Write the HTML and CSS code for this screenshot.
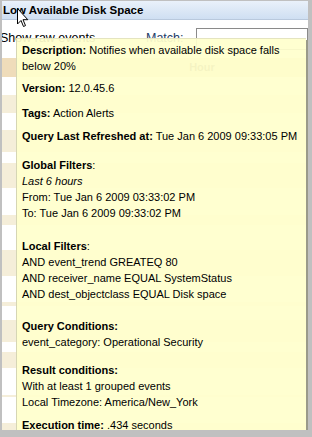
FILE: index.html
```html
<!DOCTYPE html>
<html lang="en">
<head>
  <meta charset="UTF-8" />
  <title>Low Available Disk Space</title>
  <link rel="stylesheet" href="styles.css">
</head>
<body>
  <div class="window">
    <header class="titlebar">Low Available Disk Space</header>

    <div class="toolbar">
      <span class="raw">Show raw events</span>
      <span class="match">Match:</span>
      <input class="match-input" type="text" />
    </div>

    <div class="grid">
      <div class="grid-head"><span></span><span>Hour</span><span></span></div>
      <div class="row"></div>
      <div class="row alt"></div>
      <div class="row"></div>
      <div class="row alt"></div>
      <div class="row"></div>
      <div class="row alt"></div>
      <div class="row"></div>
      <div class="row alt"></div>
      <div class="row"></div>
      <div class="row alt"></div>
      <div class="row"></div>
      <div class="row alt"></div>
      <div class="row"></div>
      <div class="row alt"></div>
      <div class="row"></div>
      <div class="row alt"></div>
      <div class="row"></div>
      <div class="row alt"></div>
      <div class="row"></div>
      <div class="row alt"></div>
    </div>

    <svg class="cursor" width="12" height="20" viewBox="0 0 12 20">
      <path d="M0.5 0.5 L0.5 16 L4 12.5 L6.5 18.5 L8.5 17.6 L6 11.7 L10.8 11.7 Z" fill="#fff" stroke="#000" stroke-width="1" stroke-linejoin="miter"/>
    </svg>

    <div class="tooltip">
      <p><b>Description:</b> Notifies when available disk space falls below 20%</p>
      <p class="sp-version"><b>Version:</b> 12.0.45.6</p>
      <p class="sp-tags"><b>Tags:</b> Action Alerts</p>
      <p class="sp-query"><b>Query Last Refreshed at:</b> Tue Jan 6 2009 09:33:05 PM</p>
      <p class="sp-global"><b>Global Filters</b>:<br>
        <i>Last 6 hours</i><br>
        From: Tue Jan 6 2009 03:33:02 PM<br>
        To: Tue Jan 6 2009 09:33:02 PM</p>
      <p class="sp-local"><b>Local Filters</b>:<br>
        AND event_trend GREATEQ 80<br>
        AND receiver_name EQUAL SystemStatus<br>
        AND dest_objectclass EQUAL Disk space</p>
      <p class="sp-cond"><b>Query Conditions:</b><br>
        event_category: Operational Security</p>
      <p class="sp-result"><b>Result conditions:</b><br>
        With at least 1 grouped events<br>
        Local Timezone: America/New_York</p>
      <p class="sp-exec"><b>Execution time:</b> .434 seconds</p>
    </div>
  </div>
</body>
</html>
```

FILE: styles.css
```css
body {
  margin: 0;
  background: #c0c0c0;
  font-family: 'Liberation Sans', Arial, sans-serif;
  color: #000;
  height: 437px;
  overflow: hidden;
}

.window {
  position: relative;
  margin: 1px 4px 0 2px;
  height: 429px;
  background: #fff;
  overflow: hidden;
}

.titlebar {
  height: 18px;
  line-height: 18px;
  padding-left: 1px;
  font-size: 11.5px;
  font-weight: bold;
  background: linear-gradient(to bottom, #eaf1fa, #cfdff2);
  border-bottom: 1px solid #b9c9dd;
}

.toolbar {
  display: flex;
  align-items: flex-start;
  height: 38px;
  padding-top: 8px;
  box-sizing: border-box;
  font-size: 12.5px;
  white-space: nowrap;
}

.raw {
  flex: 0 0 146px;
  margin-left: -2px;
  padding-top: 3px;
}

.match {
  flex: 0 0 50px;
  padding-top: 3px;
  color: #1d3b66;
}

.match-input {
  flex: 1;
  min-width: 0;
  height: 20px;
  margin: 0;
  border: 1px solid #8a8a8a;
  padding: 0;
}

.grid-head {
  display: grid;
  grid-template-columns: 158px 84px 1fr;
  height: 19px;
  line-height: 19px;
  background: #efdcba;
  font-size: 11px;
  font-weight: bold;
  color: #6b5a3a;
  text-align: center;
}

.row { height: 18px; }
.row.alt { background: #f5eed9; }

.row:nth-of-type(2)  { height: 18px; }
.row:nth-of-type(3)  { height: 18px; }
.row:nth-of-type(4)  { height: 17px; }
.row:nth-of-type(5)  { height: 22px; }
.row:nth-of-type(6)  { height: 11px; }
.row:nth-of-type(7)  { height: 25px; }
.row:nth-of-type(8)  { height: 27px; }
.row:nth-of-type(9)  { height: 10px; }
.row:nth-of-type(10) { height: 25px; }
.row:nth-of-type(11) { height: 26px; }
.row:nth-of-type(12) { height: 26px; }
.row:nth-of-type(13) { height: 4px; }
.row:nth-of-type(14) { height: 14px; }
.row:nth-of-type(15) { height: 22px; }
.row:nth-of-type(16) { height: 10px; }
.row:nth-of-type(17) { height: 16px; }
.row:nth-of-type(18) { height: 27px; }
.row:nth-of-type(19) { height: 2px; }
.row:nth-of-type(20) { height: 26px; }
.row:nth-of-type(21) { height: 10px; }

.cursor {
  position: absolute;
  left: 15px;
  top: 7px;
}

.tooltip {
  position: absolute;
  left: 14px;
  top: 37px;
  width: 290px;
  height: 394px;
  box-sizing: border-box;
  padding: 3px 6px 0 5px;
  background: rgba(255, 255, 204, 0.93);
  border-left: 1px solid #d6d6b4;
  border-top: 1px solid #e4e4c0;
  box-shadow: 2px 2px 0 #9a9a8a;
  font-size: 11px;
  line-height: 16px;
}

.tooltip p { margin: 0; }

.sp-version { margin-top: 6px !important; }
.sp-tags    { margin-top: 9px !important; }
.sp-query   { margin-top: 7px !important; }
.sp-global  { margin-top: 13px !important; }
.sp-local   { margin-top: 17px !important; }
.sp-cond    { margin-top: 16px !important; }
.sp-result  { margin-top: 12px !important; }
.sp-exec    { margin-top: 7px !important; }
```
